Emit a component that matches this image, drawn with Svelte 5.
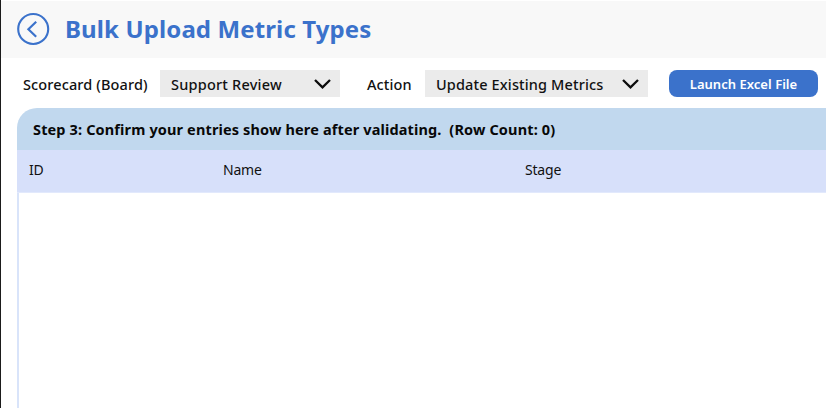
<script>
  let scorecard = $state('Support Review');
  let action = $state('Update Existing Metrics');
  let rowCount = $state(0);
</script>

{#snippet chevron()}
  <svg class="chevron" width="18" height="12" viewBox="0 0 18 12" aria-hidden="true">
    <path d="M2 2 9.5 9.4 17 2" fill="none" stroke="#0c0c0c" stroke-width="2.3" />
  </svg>
{/snippet}

<main>
  <header>
    <button class="back" aria-label="Back">
      <svg width="34" height="34" viewBox="0 0 34 34">
        <circle cx="17.2" cy="17" r="15" fill="none" stroke="#3b72cb" stroke-width="2.1" />
        <path d="M20.2 9.8 12.4 17.2 20.2 24.8" fill="none" stroke="#3b72cb" stroke-width="2.2" />
      </svg>
    </button>
    <h1>Bulk Upload Metric Types</h1>
  </header>

  <div class="toolbar">
    <span class="label board">Scorecard (Board)</span>
    <button class="select first"><span>{scorecard}</span>{@render chevron()}</button>
    <span class="label action">Action</span>
    <button class="select second"><span>{action}</span>{@render chevron()}</button>
    <button class="launch">Launch Excel File</button>
  </div>

  <section class="panel">
    <h2>Step 3: Confirm your entries show here after validating.&nbsp; (Row Count: {rowCount})</h2>
    <div class="columns">
      <span class="id">ID</span>
      <span class="name">Name</span>
      <span class="stage">Stage</span>
    </div>
    <div class="rows"></div>
  </section>
</main>

<style>
  :global(body) { background: #fff; overflow: hidden; }
  main {
    box-sizing: border-box;
    height: 408px;
    width: 826px;
    overflow: hidden;
    padding-top: 1px;
    border-left: 1px solid #1b1b1b;
    display: flex;
    flex-direction: column;
    background: #fff;
    color: #111;
    font-family: "Noto Sans", "Open Sans", sans-serif;
    white-space: nowrap;
  }
  button { border: 0; padding: 0; font: inherit; color: inherit; text-align: left; }
  header {
    box-sizing: border-box;
    height: 57px;
    flex: none;
    display: flex;
    align-items: center;
    padding: 0 0 1px 15px;
    background: #f8f8f8;
  }
  .back { background: none; width: 34px; height: 34px; }
  .back svg { display: block; }
  h1 {
    margin: 0 0 1px 15px;
    font-size: 24px;
    line-height: 34px;
    font-weight: 700;
    letter-spacing: 0.12px;
    color: #3b72cb;
  }
  .toolbar {
    flex: none;
    height: 27px;
    margin-top: 12px;
    display: flex;
    align-items: center;
    padding-left: 22px;
    font-size: 14.5px;
    font-weight: 500;
    letter-spacing: 0.12px;
    line-height: 27px;
  }
  .label { padding-top: 1px; line-height: 24px; }
  .board { width: 137px; }
  .action { width: 58px; margin-left: 27px; }
  .select {
    box-sizing: border-box;
    height: 27px;
    padding: 0 9px 0 11px;
    display: flex;
    align-items: center;
    justify-content: space-between;
    background: #ebebeb;
    letter-spacing: 0.14px;
  }
  .select span { padding-top: 1px; line-height: 24px; }
  .first { width: 180px; letter-spacing: 0.21px; }
  .second { width: 223px; }
  .launch {
    box-sizing: border-box;
    margin-left: 21px;
    width: 149px;
    height: 27px;
    padding-top: 1px;
    border-radius: 8px;
    background: #3b72cb;
    color: #fff;
    font-size: 13px;
    font-weight: 600;
    letter-spacing: 0.03px;
    text-align: center;
    line-height: 26px;
  }
  .panel {
    box-sizing: border-box;
    flex: 1;
    margin: 11px 0 0 16px;
    border-top-left-radius: 20px;
    overflow: hidden;
    display: flex;
    flex-direction: column;
  }
  h2 {
    margin: 0;
    height: 42px;
    padding-left: 16px;
    background: #c1d8ee;
    font-size: 14.5px;
    font-weight: 700;
    letter-spacing: 0.14px;
    line-height: 43px;
    color: #080808;
  }
  .columns {
    height: 43px;
    box-sizing: border-box;
    display: flex;
    padding-left: 12px;
    background: #d7e0fa;
    border-bottom: 1px solid #e2e9fc;
    font-size: 14px;
    letter-spacing: -0.2px;
    line-height: 40px;
  }
  .id { width: 194px; }
  .name { width: 302px; }
  .rows { flex: 1; border-left: 2px solid #d9e4fa; }
</style>
